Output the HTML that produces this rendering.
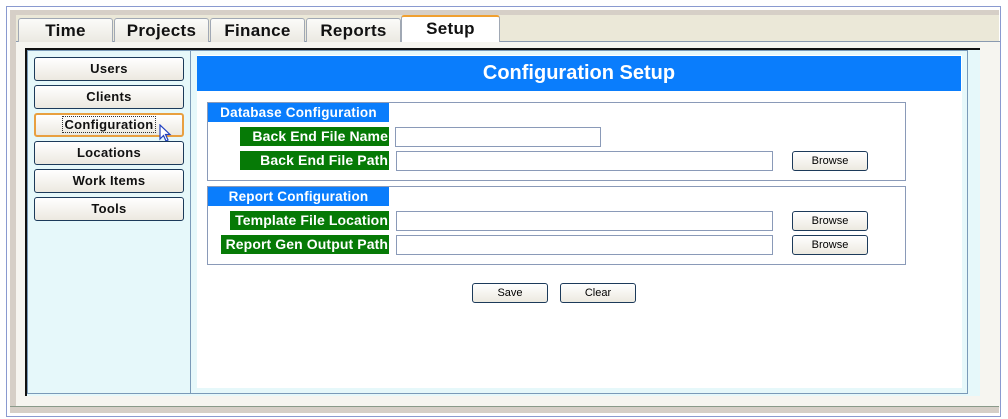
<!DOCTYPE html>
<html><head><style>
*{margin:0;padding:0;box-sizing:border-box}
body{width:1008px;height:419px;background:#fff;position:relative;overflow:hidden;font-family:"Liberation Sans",Arial,sans-serif}
.a{position:absolute}
.tab{position:absolute;top:18px;height:24px;background:linear-gradient(#fbfbf9,#ebe9e2);border:1px solid #a0a8b4;border-bottom:none;border-radius:3px 3px 0 0;font-weight:bold;font-size:17px;letter-spacing:0.3px;text-align:center;line-height:24px;color:#111}
.sb{position:absolute;left:34px;width:150px;height:24px;border:1px solid #1c3a5a;border-radius:3px;background:linear-gradient(#fff,#ece9e0);font-weight:bold;font-size:13px;letter-spacing:0.3px;text-align:center;line-height:22px;color:#111}
.lg{position:absolute;background:#0a7dfc;color:#fff;font-weight:bold;font-size:13.5px;letter-spacing:0.2px;text-align:center;line-height:19px;height:19px}
.lb{position:absolute;background:#067a06;color:#fff;font-weight:bold;font-size:14px;letter-spacing:0.1px;text-align:right;padding-right:1px;line-height:19px;height:19px;white-space:nowrap}
.in{position:absolute;border:1px solid #8a9ab8;background:#fff;height:20px}
.bt{position:absolute;width:76px;height:20px;border:1px solid #1c3a5a;border-radius:3px;background:linear-gradient(#fff,#ece9e0);font-size:11px;text-align:center;line-height:18px;color:#000}
.fs{position:absolute;left:207px;width:699px;height:79px;border:1px solid #8a9ab8}
</style></head><body>
<div class="a" style="left:6px;top:6px;width:995px;height:411px;border:1px solid #8a9ad0"></div>
<div class="a" style="left:10px;top:10px;width:989px;height:5px;background:#d6cfc7"></div>
<div class="a" style="left:10px;top:15px;width:989px;height:27px;background:#ebe8d8"></div>
<div class="a" style="left:16px;top:41px;width:984px;height:367px;background:#f6f5f0;border-top:1px solid #8a9ab0"></div>
<div class="a" style="left:10px;top:15px;width:6px;height:398px;background:#d6cfc7"></div>
<div class="a" style="left:10px;top:406px;width:989px;height:7px;background:#d6cfc7;border-top:1px solid #8a9a8a"></div>
<div class="tab" style="left:18px;width:95px">Time</div>
<div class="tab" style="left:114px;width:95px">Projects</div>
<div class="tab" style="left:210px;width:95px">Finance</div>
<div class="tab" style="left:306px;width:95px">Reports</div>
<div class="tab" style="left:401px;top:15px;height:27px;width:99px;background:#fff;border-top:2px solid #f0a030;line-height:24px">Setup</div>
<div class="a" style="left:25px;top:48px;width:955px;height:348px;border-top:2px solid #111;border-left:2px solid #111;background:#e6f8fa"></div>
<div class="a" style="left:27px;top:50px;width:941px;height:344px;border:1px solid #7a9ab8;background:#e6f8fa"></div>
<div class="a" style="left:190px;top:51px;width:1px;height:342px;background:#7a9ab8"></div>
<div class="a" style="left:197px;top:55px;width:765px;height:333px;background:#fff"></div>
<div class="a" style="left:197px;top:56px;width:764px;height:35px;background:#0a7dfc;color:#fff;font-weight:bold;font-size:20px;text-align:center;line-height:35px">Configuration Setup</div>
<div class="sb" style="top:57px">Users</div>
<div class="sb" style="top:85px">Clients</div>
<div class="sb" style="top:113px;border-color:#e8a040;border-width:2px;line-height:20px"><span style="border:1px dotted #333;padding:0 1px">Configuration</span></div>
<svg class="a" style="left:159px;top:124px" width="14" height="20" viewBox="0 0 14 20"><path d="M1 1 L1 15 L4.5 11.5 L7 17 L9 16 L6.5 10.5 L11 10.5 Z" fill="#fff" stroke="#2040c0" stroke-width="1.2"/></svg>
<div class="sb" style="top:141px">Locations</div>
<div class="sb" style="top:169px">Work Items</div>
<div class="sb" style="top:197px">Tools</div>
<div class="fs" style="top:102px"></div>
<div class="lg" style="left:208px;top:103px;width:181px">Database Configuration</div>
<div class="lb" style="left:240px;top:127px;width:149px">Back End File Name</div>
<div class="in" style="left:395px;top:127px;width:206px"></div>
<div class="lb" style="left:240px;top:151px;width:149px">Back End File Path</div>
<div class="in" style="left:396px;top:151px;width:377px"></div>
<div class="bt" style="left:792px;top:151px">Browse</div>
<div class="fs" style="top:186px"></div>
<div class="lg" style="left:208px;top:187px;width:181px">Report Configuration</div>
<div class="lb" style="left:230px;top:211px;width:159px">Template File Location</div>
<div class="in" style="left:396px;top:211px;width:377px"></div>
<div class="bt" style="left:792px;top:211px">Browse</div>
<div class="lb" style="left:221px;top:235px;width:168px">Report Gen Output Path</div>
<div class="in" style="left:396px;top:235px;width:377px"></div>
<div class="bt" style="left:792px;top:235px">Browse</div>
<div class="bt" style="left:472px;top:283px">Save</div>
<div class="bt" style="left:560px;top:283px">Clear</div>
</body></html>
